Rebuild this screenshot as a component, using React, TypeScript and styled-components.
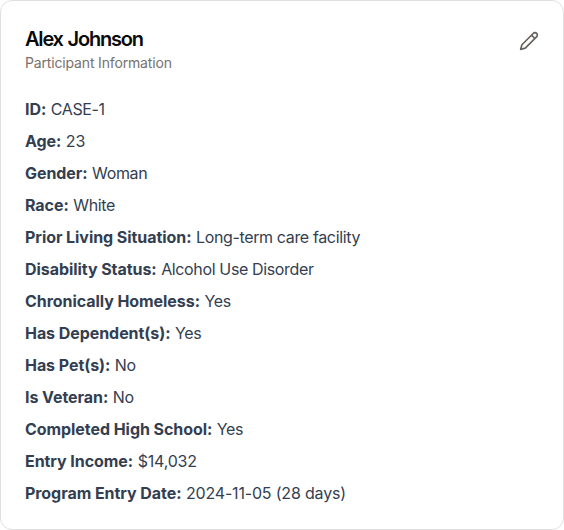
import React from "react";
import styled, { createGlobalStyle } from "styled-components";

const GlobalStyle = createGlobalStyle`
  *, *::before, *::after { box-sizing: border-box; }
  body {
    margin: 0;
    background: #fff;
    font-family: Inter, "Liberation Sans", sans-serif;
  }
`;

const Card = styled.section`
  height: 530px;
  padding: 24px;
  border: 1px solid #e0e0e0;
  border-radius: 12px;
  background: #fff;
`;

const Header = styled.header`
  display: flex;
  justify-content: space-between;
  align-items: flex-start;
  height: 72px;
`;

const Name = styled.h2`
  margin: 4px 0 0;
  font-size: 20px;
  line-height: 20px;
  font-weight: 600;
  letter-spacing: -1.2px;
  word-spacing: 1px;
  color: #0a0a0a;
`;

const Subtitle = styled.p`
  margin: 4px 0 0;
  font-size: 14px;
  line-height: 20px;
  letter-spacing: -0.16px;
  color: #78716c;
`;

const EditButton = styled.button`
  display: flex;
  margin: 6px 0 0;
  padding: 0;
  border: 0;
  background: none;
  color: #67625e;
`;

const Details = styled.dl`
  display: grid;
  gap: 8px;
  margin: 0;
`;

const Row = styled.div`
  display: flex;
  gap: 4.5px;
  font-size: 16px;
  line-height: 24px;
  color: #333e50;
`;

const Label = styled.dt`
  font-weight: 700;
  letter-spacing: -0.06px;
`;

const Value = styled.dd<{ $numeric: boolean }>`
  margin: 0;
  letter-spacing: ${({ $numeric }) => ($numeric ? "-0.18px" : "-0.36px")};
`;

const details = [
  ["ID", "CASE-1"],
  ["Age", "23"],
  ["Gender", "Woman"],
  ["Race", "White"],
  ["Prior Living Situation", "Long-term care facility"],
  ["Disability Status", "Alcohol Use Disorder"],
  ["Chronically Homeless", "Yes"],
  ["Has Dependent(s)", "Yes"],
  ["Has Pet(s)", "No"],
  ["Is Veteran", "No"],
  ["Completed High School", "Yes"],
  ["Entry Income", "$14,032"],
  ["Program Entry Date", "2024-11-05 (28 days)"],
];

export default function App() {
  return (
    <>
      <GlobalStyle />
      <Card>
        <Header>
          <div>
            <Name>Alex Johnson</Name>
            <Subtitle>Participant Information</Subtitle>
          </div>
          <EditButton aria-label="Edit">
            <svg width="20" height="20" viewBox="0 0 24 24" fill="none" stroke="currentColor" strokeWidth="2" strokeLinecap="round" strokeLinejoin="round">
              <path d="M17 3a2.85 2.83 0 1 1 4 4L7.5 20.5 2 22l1.5-5.5Zm-2 2 4 4" />
            </svg>
          </EditButton>
        </Header>
        <Details>
          {details.map(([label, value]) => (
            <Row key={label}>
              <Label>{label}:</Label>
              <Value $numeric={/^[$\d]/.test(value)}>{value}</Value>
            </Row>
          ))}
        </Details>
      </Card>
    </>
  );
}
